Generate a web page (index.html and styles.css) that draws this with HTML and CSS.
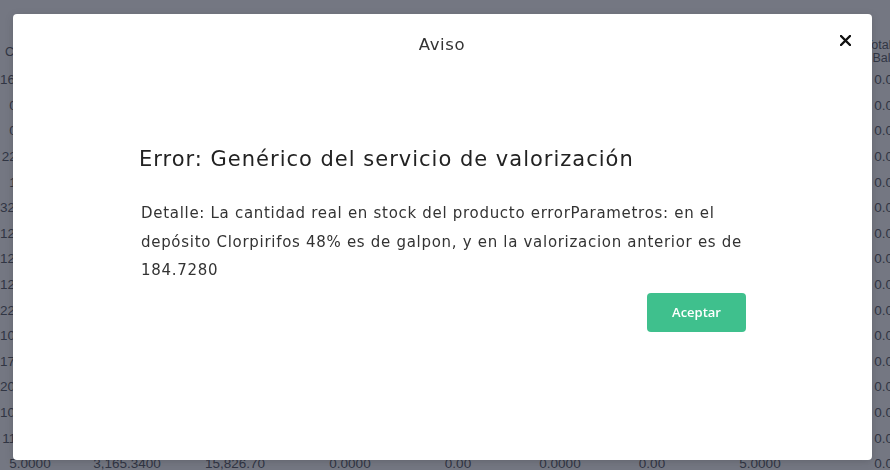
FILE: index.html
```html
<!DOCTYPE html>
<html lang="es">
<head>
<meta charset="utf-8">
<title>Aviso</title>
<link rel="stylesheet" href="styles.css">
</head>
<body>
<div class="table">
  <div class="row head">
    <div class="c c1">Cantidad</div><div class="c c2">Costo</div><div class="c c3">Total</div><div class="c c4">Cant.</div><div class="c c5">Costo</div><div class="c c6">Cant.</div><div class="c c7">Val</div><div class="c c8">Cantidad</div><div class="c c9">Total saldo<br>Balance</div>
  </div>
  <div class="row"><div class="c c1">1611.0000</div><div class="c c2">1.0000</div><div class="c c3">0.00</div><div class="c c4">0.0000</div><div class="c c5">0.00</div><div class="c c6">0.0000</div><div class="c c7">0.00</div><div class="c c8">0.0000</div><div class="c c9">0.0000</div></div>
  <div class="row"><div class="c c1">0.0000</div><div class="c c2">1.0000</div><div class="c c3">0.00</div><div class="c c4">0.0000</div><div class="c c5">0.00</div><div class="c c6">0.0000</div><div class="c c7">0.00</div><div class="c c8">0.0000</div><div class="c c9">0.0000</div></div>
  <div class="row"><div class="c c1">0.0000</div><div class="c c2">1.0000</div><div class="c c3">0.00</div><div class="c c4">0.0000</div><div class="c c5">0.00</div><div class="c c6">0.0000</div><div class="c c7">0.00</div><div class="c c8">0.0000</div><div class="c c9">0.0000</div></div>
  <div class="row"><div class="c c1">228.0000</div><div class="c c2">1.0000</div><div class="c c3">0.00</div><div class="c c4">0.0000</div><div class="c c5">0.00</div><div class="c c6">0.0000</div><div class="c c7">0.00</div><div class="c c8">0.0000</div><div class="c c9">0.0000</div></div>
  <div class="row"><div class="c c1">1.0000</div><div class="c c2">1.0000</div><div class="c c3">0.00</div><div class="c c4">0.0000</div><div class="c c5">0.00</div><div class="c c6">0.0000</div><div class="c c7">0.00</div><div class="c c8">0.0000</div><div class="c c9">0.0000</div></div>
  <div class="row"><div class="c c1">3204.0000</div><div class="c c2">1.0000</div><div class="c c3">0.00</div><div class="c c4">0.0000</div><div class="c c5">0.00</div><div class="c c6">0.0000</div><div class="c c7">0.00</div><div class="c c8">0.0000</div><div class="c c9">0.0000</div></div>
  <div class="row"><div class="c c1">1264.0000</div><div class="c c2">1.0000</div><div class="c c3">0.00</div><div class="c c4">0.0000</div><div class="c c5">0.00</div><div class="c c6">0.0000</div><div class="c c7">0.00</div><div class="c c8">0.0000</div><div class="c c9">0.0000</div></div>
  <div class="row"><div class="c c1">1260.0000</div><div class="c c2">1.0000</div><div class="c c3">0.00</div><div class="c c4">0.0000</div><div class="c c5">0.00</div><div class="c c6">0.0000</div><div class="c c7">0.00</div><div class="c c8">0.0000</div><div class="c c9">0.0000</div></div>
  <div class="row"><div class="c c1">1261.0000</div><div class="c c2">1.0000</div><div class="c c3">0.00</div><div class="c c4">0.0000</div><div class="c c5">0.00</div><div class="c c6">0.0000</div><div class="c c7">0.00</div><div class="c c8">0.0000</div><div class="c c9">0.0000</div></div>
  <div class="row"><div class="c c1">2207.0000</div><div class="c c2">1.0000</div><div class="c c3">0.00</div><div class="c c4">0.0000</div><div class="c c5">0.00</div><div class="c c6">0.0000</div><div class="c c7">0.00</div><div class="c c8">0.0000</div><div class="c c9">0.0000</div></div>
  <div class="row"><div class="c c1">1000.0000</div><div class="c c2">1.0000</div><div class="c c3">0.00</div><div class="c c4">0.0000</div><div class="c c5">0.00</div><div class="c c6">0.0000</div><div class="c c7">0.00</div><div class="c c8">0.0000</div><div class="c c9">0.0000</div></div>
  <div class="row"><div class="c c1">1740.0000</div><div class="c c2">1.0000</div><div class="c c3">0.00</div><div class="c c4">0.0000</div><div class="c c5">0.00</div><div class="c c6">0.0000</div><div class="c c7">0.00</div><div class="c c8">0.0000</div><div class="c c9">0.0000</div></div>
  <div class="row"><div class="c c1">2000.0000</div><div class="c c2">1.0000</div><div class="c c3">0.00</div><div class="c c4">0.0000</div><div class="c c5">0.00</div><div class="c c6">0.0000</div><div class="c c7">0.00</div><div class="c c8">0.0000</div><div class="c c9">0.0000</div></div>
  <div class="row"><div class="c c1">1008.0000</div><div class="c c2">1.0000</div><div class="c c3">0.00</div><div class="c c4">0.0000</div><div class="c c5">0.00</div><div class="c c6">0.0000</div><div class="c c7">0.00</div><div class="c c8">0.0000</div><div class="c c9">0.0000</div></div>
  <div class="row"><div class="c c1">116.0000</div><div class="c c2">1.0000</div><div class="c c3">0.00</div><div class="c c4">0.0000</div><div class="c c5">0.00</div><div class="c c6">0.0000</div><div class="c c7">0.00</div><div class="c c8">0.0000</div><div class="c c9">0.0000</div></div>
  <div class="row"><div class="c c1">5.0000</div><div class="c c2">3,165.3400</div><div class="c c3">15,826.70</div><div class="c c4">0.0000</div><div class="c c5">0.00</div><div class="c c6">0.0000</div><div class="c c7">0.00</div><div class="c c8">5.0000</div><div class="c c9">0.0000</div></div>
</div>

<div class="overlay">
  <div class="modal">
    <div class="modal-header">
      <span></span>
      <h2 class="modal-title">Aviso</h2>
      <button class="close" aria-label="Cerrar">
        <svg width="11" height="11" viewBox="0 0 11 11"><path d="M1 1 L10 10 M10 1 L1 10" stroke="#111" stroke-width="2.4" stroke-linecap="round"/></svg>
      </button>
    </div>
    <div class="modal-body">
      <h3 class="error-title">Error: Genérico del servicio de valorización</h3>
      <p class="error-detail">Detalle: La cantidad real en stock del producto errorParametros: en el depósito Clorpirifos 48% es de galpon, y en la valorizacion anterior es de 184.7280</p>
      <div class="actions">
        <button class="btn-accept">Aceptar</button>
      </div>
    </div>
  </div>
</div>
</body>
</html>
```

FILE: styles.css
```css
* { box-sizing: border-box; }

html, body {
  margin: 0;
  width: 890px;
  height: 470px;
  overflow: hidden;
  background: #ffffff;
  font-family: "DejaVu Sans", "Open Sans", sans-serif;
}

.table {
  display: flex;
  flex-direction: column;
  width: 890px;
  overflow: hidden;
  padding-top: 37px;
  color: #50545c;
  font-family: "Liberation Sans", sans-serif;
  font-size: 13.5px;
}

.row {
  display: flex;
  height: 25.6px;
  align-items: center;
}

.row.head {
  height: 30px;
  line-height: 13px;
  font-size: 12.5px;
}

.c { text-align: center; white-space: nowrap; flex: none; }
.c1 { width: 60px; }
.c2 { width: 134px; }
.c3 { width: 82px; }
.c4 { width: 148px; }
.c5 { width: 68px; }
.c6 { width: 136px; }
.c7 { width: 48px; }
.c8 { width: 168px; }
.c9 { width: 102px; }

.overlay {
  position: fixed;
  inset: 0;
  background: rgba(30, 36, 54, 0.62);
  display: flex;
  padding: 14px 18px 10px 13px;
}

.modal {
  flex: 1;
  background: #ffffff;
  border-radius: 4px;
  display: flex;
  flex-direction: column;
  box-shadow: 0 2px 8px rgba(0, 0, 0, 0.15);
}

.modal-header {
  display: grid;
  grid-template-columns: 1fr auto 1fr;
  align-items: center;
  padding: 20px 21px 0 20px;
}

.modal-title {
  margin: 0;
  font-size: 16.5px;
  letter-spacing: 0.6px;
  font-weight: normal;
  line-height: 22px;
  color: #333;
}

.close {
  justify-self: end;
  display: flex;
  border: 0;
  background: none;
  padding: 0;
  margin-top: -10px;
}

.modal-body {
  display: flex;
  flex-direction: column;
  padding: 89px 126px 0 126px;
}

.error-title {
  margin: 0;
  font-size: 21px;
  letter-spacing: 1px;
  font-weight: normal;
  line-height: 28px;
  color: #222;
}

.error-detail {
  margin: 26px 0 0 2px;
  font-size: 15px;
  letter-spacing: 0.7px;
  line-height: 28.5px;
  color: #333;
}

.actions {
  display: flex;
  justify-content: flex-end;
  margin-top: 8px;
}

.btn-accept {
  width: 99px;
  height: 39px;
  border: 0;
  border-radius: 4px;
  background: #3fc08d;
  color: #fff;
  font-family: "Open Sans", sans-serif;
  font-size: 13px;
  font-weight: 600;
}
```
